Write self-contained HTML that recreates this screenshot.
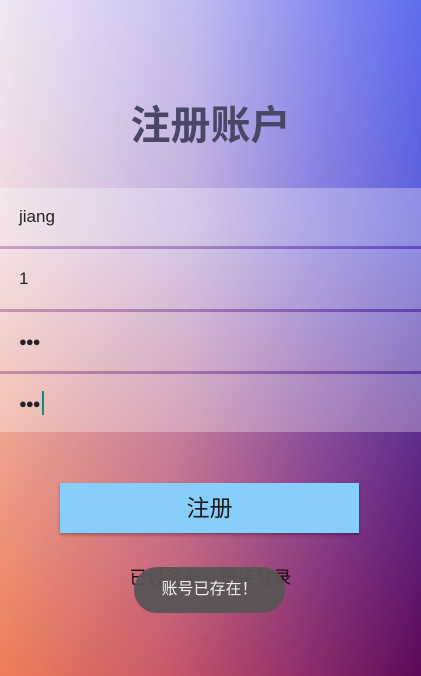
<!DOCTYPE html>
<html><head><meta charset="utf-8"><style>
*{margin:0;padding:0;box-sizing:border-box}
body{width:421px;height:676px;position:relative;overflow:hidden;font-family:"Liberation Sans","Noto Sans CJK SC",sans-serif}
.bg1{position:absolute;inset:0;background:linear-gradient(to right,#ef7e58 0%,#c8586a 40%,#8a2a6a 75%,#5e0a58 100%)}
.bg2{position:absolute;inset:0;background:linear-gradient(to right,#f0e8f4 0%,#c4bff0 45%,#8a8ef0 75%,#5f6cee 100%);-webkit-mask-image:linear-gradient(to bottom,#000 0%,rgba(0,0,0,.85) 35%,rgba(0,0,0,.35) 65%,transparent 100%);mask-image:linear-gradient(to bottom,#000 0%,rgba(0,0,0,.85) 35%,rgba(0,0,0,.35) 65%,transparent 100%)}
.title{position:absolute;top:93px;left:0;width:421px;text-align:center;font-size:40px;font-weight:bold;color:#4a4666}
.row{position:absolute;left:0;width:421px;background:rgba(255,255,255,.3);font-size:17px;color:#222;padding-left:19px;display:flex;align-items:center}
.sep{position:absolute;left:0;width:421px;height:3px;background:rgba(90,50,150,.3)}
.dots{font-size:13px;font-weight:bold;letter-spacing:-1px}
.cur{display:inline-block;width:2px;height:24px;background:#0a8f80;margin-left:2px}
.btn{position:absolute;left:60px;top:483px;width:299px;height:50px;background:#87cefa;box-shadow:0 2px 3px rgba(0,0,0,.3);text-align:center;line-height:50px;font-size:23px;color:#1a1a1a}
.link{position:absolute;top:564px;left:0;width:421px;text-align:center;font-size:18px;color:#111}
.toast{position:absolute;left:134px;top:567px;width:151px;height:46px;border-radius:23px;background:rgba(88,84,86,.95);color:#eee;font-size:16px;text-align:center;line-height:46px}
</style></head><body>
<div class="bg1"></div><div class="bg2"></div>
<div class="title">注册账户</div>
<div class="row" style="top:188px;height:58px">jiang</div>
<div class="sep" style="top:246px"></div>
<div class="row" style="top:249px;height:60px">1</div>
<div class="sep" style="top:309px"></div>
<div class="row" style="top:312px;height:59px"><span class="dots">●●●</span></div>
<div class="sep" style="top:371px"></div>
<div class="row" style="top:374px;height:58px"><span class="dots">●●●</span><span class="cur"></span></div>
<div class="btn">注册</div>
<div class="link">已经注册？直接登录</div>
<div class="toast">账号已存在！</div>
</body></html>
